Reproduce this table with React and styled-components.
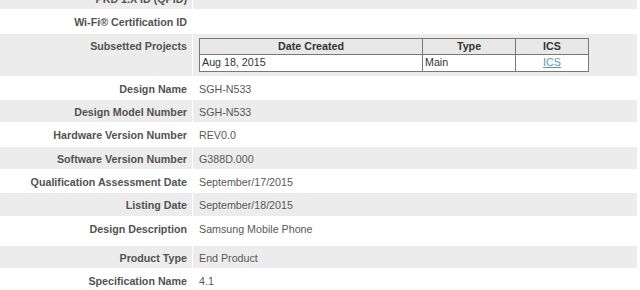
import React from 'react'
import styled, { createGlobalStyle } from 'styled-components'

const Global = createGlobalStyle`
body{
    margin:0;
    background:#fff;
    overflow:hidden;
    font-family:"Liberation Sans", Arial, sans-serif;
}
`
const Sheet = styled.div`
width:637px;
margin-top:-13px;
display:flex;
flex-direction:column;
gap:1px;
background:#fff;
`
const Row = styled.div`
display:grid;
grid-template-columns:192px 1fr;
column-gap:1px;
min-height:${p => p.$h || 22.33}px;
`
const Label = styled.div`
background:${p => p.$alt ? '#ececec' : '#fff'};
text-align:right;
padding:6px 5px 0 0;
font-size:10.7px;
line-height:13px;
font-weight:700;
color:#525252;
`
const Value = styled.div`
background:${p => p.$alt ? '#ececec' : '#fff'};
padding:${p => p.$sub ? '4px 6px 4px 6px' : '6px 6px 0 6px'};
font-size:10.7px;
line-height:13px;
color:#585858;
`
const SubTable = styled.table`
border-collapse:collapse;
width:390px;
table-layout:fixed;
border:1px solid #777;
font-size:10.7px;
color:#333;
`
const Th = styled.th`
height:15px;
padding:0;
background:#e8e8e8;
border:1px solid #777;
font-weight:700;
line-height:13px;
text-align:center;
`
const Td = styled.td`
height:16px;
padding:0 2px;
background:#fff;
border:1px solid #777;
line-height:13px;
text-align:${p => p.$center ? 'center' : 'left'};
`
const LinkText = styled.a`
color:#5b98b4;
text-decoration:underline;
`

const rows = [
    ['PRD 1.X ID (QPID)', ''],
    ['Wi-Fi® Certification ID', ''],
    ['Subsetted Projects', 'SUB'],
    ['Design Name', 'SGH-N533'],
    ['Design Model Number', 'SGH-N533'],
    ['Hardware Version Number', 'REV0.0'],
    ['Software Version Number', 'G388D.000'],
    ['Qualification Assessment Date', 'September/17/2015'],
    ['Listing Date', 'September/18/2015'],
    ['Design Description', 'Samsung Mobile Phone', 28],
    ['Product Type', 'End Product'],
    ['Specification Name', '4.1'],
]

function Projects() {
    return (
        <SubTable>
            <colgroup>
                <col style={{ width: 223 }} />
                <col style={{ width: 93 }} />
                <col style={{ width: 73 }} />
            </colgroup>
            <thead>
                <tr>
                    <Th>Date Created</Th>
                    <Th>Type</Th>
                    <Th>ICS</Th>
                </tr>
            </thead>
            <tbody>
                <tr>
                    <Td>Aug 18, 2015</Td>
                    <Td>Main</Td>
                    <Td $center><LinkText href="#">ICS</LinkText></Td>
                </tr>
            </tbody>
        </SubTable>
    )
}

export default function App() {
    return (
        <>
            <Global />
            <Sheet>
                {rows.map(([label, value, h], i) => {
                    const alt = i % 2 === 0
                    const sub = value === 'SUB'
                    return (
                        <Row key={label} $h={h}>
                            <Label $alt={alt}>{label}</Label>
                            <Value $alt={alt} $sub={sub}>
                                {sub ? <Projects /> : value}
                            </Value>
                        </Row>
                    )
                })}
            </Sheet>
        </>
    )
}
